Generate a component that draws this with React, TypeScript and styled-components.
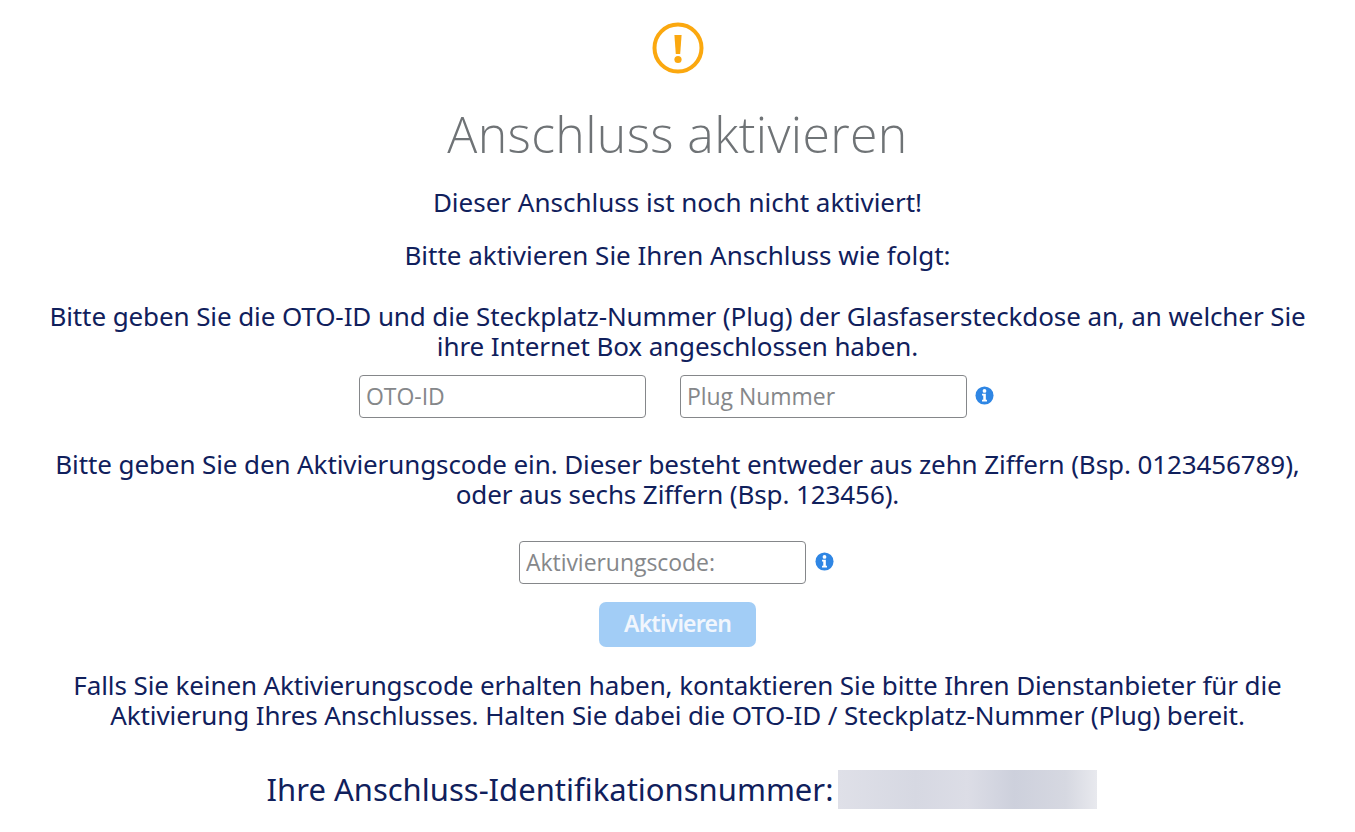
import React from "react";
import styled, { createGlobalStyle } from "styled-components";

const Global = createGlobalStyle`
  html, body { margin: 0; padding: 0; background: #fff; }
  body { font-family: "Noto Sans", "Open Sans", sans-serif; }
`;

const Page = styled.main`
  width: 1355px;
  height: 832px;
  overflow: hidden;
  box-sizing: border-box;
  padding-top: 22px;
  display: flex;
  flex-direction: column;
  align-items: center;
  color: #10205c;
  text-align: center;
`;

const AlertIcon = styled.svg`
  width: 52px;
  height: 52px;
  display: block;
`;

const Title = styled.h1`
  margin: 27px 0 0;
  font-family: "Open Sans", sans-serif;
  font-weight: 300;
  font-size: 50px;
  line-height: 66px;
  color: #6f7376;
  letter-spacing: 0.35px;
`;

const Text = styled.p<{ $top: number; $tight?: boolean }>`
  margin: ${(p) => p.$top}px 0 0;
  width: 1290px;
  font-size: 26px;
  line-height: 30px;
  letter-spacing: ${(p) => (p.$tight ? "-0.1px" : "0")};
`;

const FieldRow = styled.div<{ $top: number }>`
  margin-top: ${(p) => p.$top}px;
  margin-right: 2px;
  display: flex;
  align-items: center;
  gap: 34px;
`;

const Field = styled.input`
  box-sizing: border-box;
  width: 287px;
  height: 43px;
  padding: 0 6px 2px;
  border: 1px solid #85878a;
  border-radius: 4px;
  background: #fff;
  font-family: "Open Sans", sans-serif;
  font-size: 23px;
  letter-spacing: -0.05px;
  outline: none;
  &::placeholder { color: #85878a; opacity: 1; }
`;

const InfoWrap = styled.span<{ $gap: number }>`
  display: flex;
  align-items: center;
  gap: ${(p) => p.$gap}px;
`;

const InfoIcon = styled.svg`
  width: 19px;
  height: 19px;
  display: block;
  margin-top: -2px;
`;

const ActivateButton = styled.button`
  margin-top: 18px;
  width: 157px;
  height: 45px;
  border: 0;
  border-radius: 7px;
  background: #a2cdf6;
  color: #f1f6fd;
  font-family: "Noto Sans", sans-serif;
  font-weight: 600;
  font-size: 23px;
  letter-spacing: -0.8px;
  padding: 0 0 4px;
`;

const IdRow = styled.div`
  margin-top: 39px;
  margin-left: 9px;
  display: flex;
  align-items: center;
  gap: 5px;
  font-size: 31px;
  line-height: 40px;
`;

const Redacted = styled.div`
  width: 259px;
  height: 39px;
  background: linear-gradient(90deg, #dfe0e8 0%, #d6d8e2 30%, #dcdde6 50%, #cdd0dc 68%, #d6d8e1 88%, #e8e9ee 100%);
`;

const Info = () => (
  <InfoIcon viewBox="0 0 20 20" aria-hidden>
    <circle cx="10" cy="10" r="9.5" fill="#2f86e4" />
    <circle cx="10" cy="5.2" r="2" fill="#fff" />
    <path d="M7.4 8.2h4v6.2h1.2v1.8H7.4v-1.8h1.3V10H7.4z" fill="#fff" />
  </InfoIcon>
);

export default function App() {
  return (
    <>
      <Global />
      <Page>
        <AlertIcon viewBox="0 0 52 52" aria-hidden>
          <circle cx="26" cy="26" r="23.5" fill="none" stroke="#fba80f" strokeWidth="4" />
          <path d="M22.4 13h7.2l-1.4 19h-4.4z" fill="#fba80f" />
          <circle cx="26" cy="37.5" r="3.6" fill="#fba80f" />
        </AlertIcon>
        <Title>Anschluss aktivieren</Title>
        <Text $top={20}>Dieser Anschluss ist noch nicht aktiviert!</Text>
        <Text $top={23}>Bitte aktivieren Sie Ihren Anschluss wie folgt:</Text>
        <Text $top={31} $tight>
          Bitte geben Sie die OTO-ID und die Steckplatz-Nummer (Plug) der Glasfasersteckdose an, an welcher Sie ihre Internet Box angeschlossen haben.
        </Text>
        <FieldRow $top={14}>
          <Field placeholder="OTO-ID" />
          <InfoWrap $gap={8}>
            <Field placeholder="Plug Nummer" />
            <Info />
          </InfoWrap>
        </FieldRow>
        <Text $top={31} $tight>
          Bitte geben Sie den Aktivierungscode ein. Dieser besteht entweder aus zehn Ziffern (Bsp. 0123456789), oder aus sechs Ziffern (Bsp. 123456).
        </Text>
        <FieldRow $top={32}>
          <InfoWrap $gap={9}>
            <Field placeholder="Aktivierungscode:" />
            <Info />
          </InfoWrap>
        </FieldRow>
        <ActivateButton disabled>Aktivieren</ActivateButton>
        <Text $top={23} $tight>
          Falls Sie keinen Aktivierungscode erhalten haben, kontaktieren Sie bitte Ihren Dienstanbieter für die Aktivierung Ihres Anschlusses. Halten Sie dabei die OTO-ID / Steckplatz-Nummer (Plug) bereit.
        </Text>
        <IdRow>
          <span>Ihre Anschluss-Identifikationsnummer:</span>
          <Redacted />
        </IdRow>
      </Page>
    </>
  );
}
